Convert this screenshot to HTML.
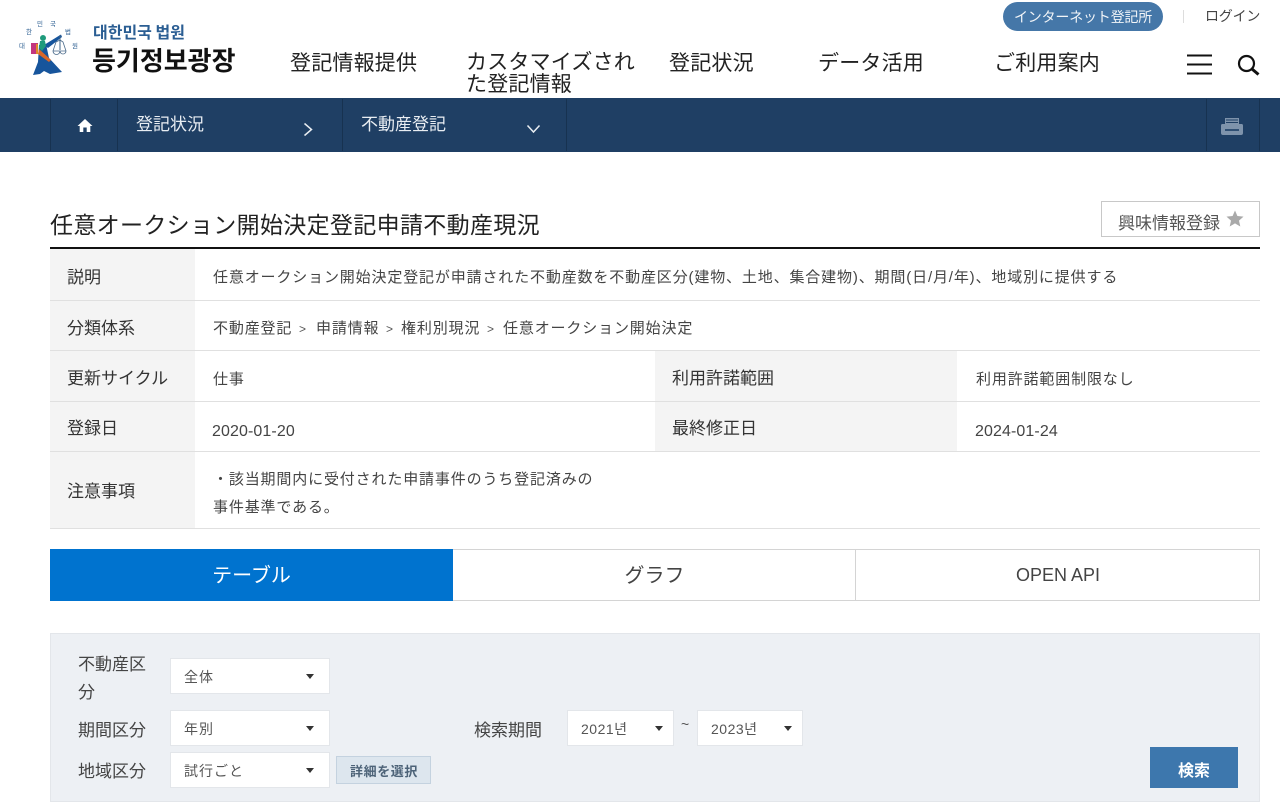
<!DOCTYPE html>
<html lang="ja"><head><meta charset="utf-8"><title>任意オークション開始決定登記申請不動産現況</title>
<style>
html,body{margin:0;padding:0;background:#fff;width:1280px;height:807px;overflow:hidden}
body{position:relative;font-family:"Liberation Sans","Noto Sans CJK JP",sans-serif;color:#333}
.t{position:absolute;white-space:nowrap;line-height:1}
.b{position:absolute;box-sizing:border-box}
.nav{font-size:21px;color:#222;letter-spacing:.2px;line-height:23px;top:52px}
.th{font-size:17px;color:#333}
.td{font-size:15px;color:#444;letter-spacing:.85px}
.dt{font-size:16px;color:#444;letter-spacing:.1px}
.gt{font-size:12px;color:#555}
.sel{position:absolute;box-sizing:border-box;background:#fff;border:1px solid #e3e6ea;height:36px}
.sel span{position:absolute;left:13px;top:11px;font-size:14px;line-height:1;color:#555;white-space:nowrap;letter-spacing:1px}
.sel i{position:absolute;top:15px;width:0;height:0;border-left:4px solid transparent;border-right:4px solid transparent;border-top:5px solid #333}
.lb{font-size:17px;color:#444}
</style></head><body>

<svg class="b" style="left:0;top:0" width="90" height="90" viewBox="0 0 90 90">
<g font-family="Noto Sans CJK KR,sans-serif" font-size="6.500" fill="#2d5f92" text-anchor="middle">
<text x="22" y="48">대</text><text x="29" y="34">한</text><text x="40" y="26">민</text><text x="53" y="26">국</text><text x="68" y="34">법</text><text x="75" y="48">원</text></g>
<path d="M39 45L46 44 49 58 62 72 50 74 44 71 40 74 33 75 38 62Z" fill="#17559c"/>
<path d="M44 45L61 34.500 62 37 48 48Z" fill="#17559c"/>
<rect x="31" y="43" width="7" height="11" fill="#c2357e"/><rect x="36" y="44" width="2" height="10" fill="#e08a2a"/>
<circle cx="43" cy="38" r="3" fill="#1f9b7c"/><path d="M40 41h5l1 5-4 5-3-3z" fill="#1f9b7c"/>
<path d="M39 49L51 60 49 62 38 54Z" fill="#d9672a"/>
<path d="M60 35V50" stroke="#3f6488" stroke-width="1" fill="none"/>
<path d="M53 51h7a3.500 3.500 0 0 1-7 0zM60 51h6a3 3 0 0 1-6 0zM53 51L56 42 60 40 63 42 66 51" fill="none" stroke="#4a6a8a" stroke-width=".8"/>
</svg>
<div class="t" style="left:93px;top:23px;font-size:16px;font-weight:700;color:#2b5e93;font-family:'Noto Sans CJK KR',sans-serif">대한민국 법원</div>
<div class="t" style="left:92px;top:47px;font-size:26px;font-weight:700;color:#111;font-family:'Noto Sans CJK KR',sans-serif">등기정보광장</div>

<div class="b" style="left:1003px;top:2px;width:160px;height:29px;border-radius:15px;background:#4577a8"></div>
<div class="t" style="left:1014px;top:10px;font-size:14px;letter-spacing:-.2px;color:#f2f5f8">インターネット登記所</div>
<div class="b" style="left:1183px;top:10px;width:1px;height:13px;background:#ddd"></div>
<div class="t" style="left:1205px;top:9px;font-size:14px;letter-spacing:-.2px;color:#444">ログイン</div>

<div class="t nav" style="left:290px">登記情報提供</div>
<div class="t nav" style="left:466px;line-height:22px">カスタマイズされ<br>た登記情報</div>
<div class="t nav" style="left:669px">登記状況</div>
<div class="t nav" style="left:818px">データ活用</div>
<div class="t nav" style="left:994px">ご利用案内</div>

<svg class="b" style="left:1186px;top:54px" width="27" height="21"><path d="M1 1.500H26M1 10.500H26M1 19.500H26" stroke="#111" stroke-width="2"/></svg>
<svg class="b" style="left:1236px;top:53px" width="26" height="24"><circle cx="10.500" cy="10.500" r="7.500" fill="none" stroke="#111" stroke-width="2.200"/><path d="M16 16L22.500 21.500" stroke="#111" stroke-width="3"/></svg>

<div class="b" style="left:0;top:98px;width:1280px;height:54px;background:#1f3f64"></div>
<div class="b" style="left:50px;top:99px;width:1px;height:52px;background:#173250"></div>
<div class="b" style="left:117px;top:99px;width:1px;height:52px;background:#173250"></div>
<div class="b" style="left:342px;top:99px;width:1px;height:52px;background:#173250"></div>
<div class="b" style="left:566px;top:99px;width:1px;height:52px;background:#173250"></div>
<div class="b" style="left:1206px;top:99px;width:1px;height:52px;background:#173250"></div>
<div class="b" style="left:1259px;top:99px;width:1px;height:52px;background:#173250"></div>
<svg class="b" style="left:77px;top:118px" width="16" height="15" viewBox="0 0 16 15"><path d="M8 1L15.500 8H13.300V14H9.700V9.500H6.300V14H2.700V8H.5Z" fill="#fff"/></svg>
<div class="t" style="left:136px;top:116px;font-size:17px;color:#e8edf2">登記状況</div>
<svg class="b" style="left:302px;top:122px" width="12" height="15"><path d="M2.500 1.500L9.500 7.500 2.500 13.500" fill="none" stroke="#e8edf2" stroke-width="1.500"/></svg>
<div class="t" style="left:361px;top:116px;font-size:17px;color:#e8edf2">不動産登記</div>
<svg class="b" style="left:526px;top:124px" width="15" height="10"><path d="M1.500 1.500L7.500 8 13.500 1.500" fill="none" stroke="#e8edf2" stroke-width="1.500"/></svg>
<svg class="b" style="left:1220px;top:117px" width="24" height="20" viewBox="0 0 24 20"><path d="M5 1h14v7H5z" fill="#7e93ab"/><path d="M2 7h20a1.500 1.500 0 0 1 1 1.500V16a2 2 0 0 1-2 2H3a2 2 0 0 1-2-2V8.500A1.500 1.500 0 0 1 2 7Z" fill="#7e93ab"/><path d="M6 3h12M6 5.500h12" stroke="#1f3f64"/><path d="M5 12h14v2H5z" fill="#2f4f73"/></svg>

<div class="t" style="left:50px;top:214px;font-size:23px;color:#222;letter-spacing:.33px">任意オークション開始決定登記申請不動産現況</div>
<div class="b" style="left:1101px;top:201px;width:159px;height:36px;border:1px solid #c8c8c8;background:#fff"></div>
<div class="t" style="left:1118px;top:215px;font-size:17px;color:#555">興味情報登録</div>
<svg class="b" style="left:1226px;top:210px" width="18" height="17" viewBox="0 0 18 17"><path d="M9 0.500L11.400 6 17.500 6.600 13 10.600 14.300 16.500 9 13.400 3.700 16.500 5 10.600 .5 6.600 6.600 6Z" fill="#a9a9a9"/></svg>
<div class="b" style="left:50px;top:247px;width:1210px;height:2px;background:#111"></div>

<div class="b" style="left:50px;top:249px;width:145px;height:279px;background:#f4f4f4"></div>
<div class="b" style="left:655px;top:351px;width:302px;height:100px;background:#f4f4f4"></div>
<div class="b" style="left:50px;top:300px;width:1210px;height:1px;background:#e0e0e0"></div>
<div class="b" style="left:50px;top:350px;width:1210px;height:1px;background:#e0e0e0"></div>
<div class="b" style="left:50px;top:401px;width:1210px;height:1px;background:#e0e0e0"></div>
<div class="b" style="left:50px;top:451px;width:1210px;height:1px;background:#e0e0e0"></div>
<div class="b" style="left:50px;top:528px;width:1210px;height:1px;background:#e0e0e0"></div>

<div class="t th" style="left:67px;top:269px">説明</div>
<div class="t th" style="left:67px;top:320px">分類体系</div>
<div class="t th" style="left:67px;top:370px">更新サイクル</div>
<div class="t th" style="left:67px;top:420px">登録日</div>
<div class="t th" style="left:67px;top:483px">注意事項</div>
<div class="t th" style="left:672px;top:370px">利用許諾範囲</div>
<div class="t th" style="left:672px;top:420px">最終修正日</div>

<div class="t td" style="left:213px;top:270px">任意オークション開始決定登記が申請された不動産数を不動産区分(建物、土地、集合建物)、期間(日/月/年)、地域別に提供する</div>
<div class="t td" style="left:213px;top:321px">不動産登記</div><div class="t gt" style="left:299px;top:323px">&gt;</div>
<div class="t td" style="left:316px;top:321px">申請情報</div><div class="t gt" style="left:386px;top:323px">&gt;</div>
<div class="t td" style="left:401px;top:321px">権利別現況</div><div class="t gt" style="left:487px;top:323px">&gt;</div>
<div class="t td" style="left:503px;top:321px">任意オークション開始決定</div>
<div class="t td" style="left:213px;top:372px">仕事</div>
<div class="t td" style="left:976px;top:372px">利用許諾範囲制限なし</div>
<div class="t dt" style="left:212px;top:424px">2020-01-20</div>
<div class="t dt" style="left:975px;top:424px">2024-01-24</div>
<div class="t td" style="left:213px;top:472px">・該当期間内に受付された申請事件のうち登記済みの</div>
<div class="t td" style="left:213px;top:500px">事件基準である。</div>

<div class="b" style="left:50px;top:549px;width:403px;height:52px;background:#0073cf"></div>
<div class="b" style="left:453px;top:549px;width:403px;height:52px;border:1px solid #d4d4d4;border-left:0;background:#fff"></div>
<div class="b" style="left:856px;top:549px;width:404px;height:52px;border:1px solid #d4d4d4;border-left:0;background:#fff"></div>
<div class="t" style="left:50px;width:403px;text-align:center;top:566px;font-size:20px;color:#fff">テーブル</div>
<div class="t" style="left:453px;width:403px;text-align:center;top:566px;font-size:20px;color:#444">グラフ</div>
<div class="t" style="left:856px;width:404px;text-align:center;top:566px;font-size:18px;color:#444">OPEN API</div>

<div class="b" style="left:50px;top:633px;width:1210px;height:169px;background:#edf0f4;border:1px solid #e3e6ea"></div>
<div class="t lb" style="left:78px;top:651px;line-height:28px">不動産区<br>分</div>
<div class="t lb" style="left:78px;top:722px">期間区分</div>
<div class="t lb" style="left:78px;top:763px">地域区分</div>
<div class="t lb" style="left:474px;top:722px">検索期間</div>

<div class="sel" style="left:170px;top:658px;width:160px"><span>全体</span><i style="left:135px"></i></div>
<div class="sel" style="left:170px;top:710px;width:160px"><span>年別</span><i style="left:135px"></i></div>
<div class="sel" style="left:170px;top:752px;width:160px"><span>試行ごと</span><i style="left:135px"></i></div>
<div class="b" style="left:336px;top:756px;width:95px;height:28px;background:#dde6ee;border:1px solid #c4d2df"></div>
<div class="t" style="left:350px;top:765px;font-size:13px;letter-spacing:.6px;font-weight:700;color:#4d6378">詳細を選択</div>

<div class="sel" style="left:567px;top:710px;width:107px"><span style="font-family:'Liberation Sans','Noto Sans CJK KR',sans-serif;letter-spacing:.5px">2021년</span><i style="left:87px"></i></div>
<div class="t" style="left:681px;top:717px;font-size:14px;color:#555">~</div>
<div class="sel" style="left:697px;top:710px;width:106px"><span style="font-family:'Liberation Sans','Noto Sans CJK KR',sans-serif;letter-spacing:.5px">2023년</span><i style="left:86px"></i></div>

<div class="b" style="left:1150px;top:747px;width:88px;height:41px;background:#3d77ad"></div>
<div class="t" style="left:1150px;width:88px;text-align:center;top:764px;font-size:16px;font-weight:700;color:#fff">検索</div>
</body></html>
